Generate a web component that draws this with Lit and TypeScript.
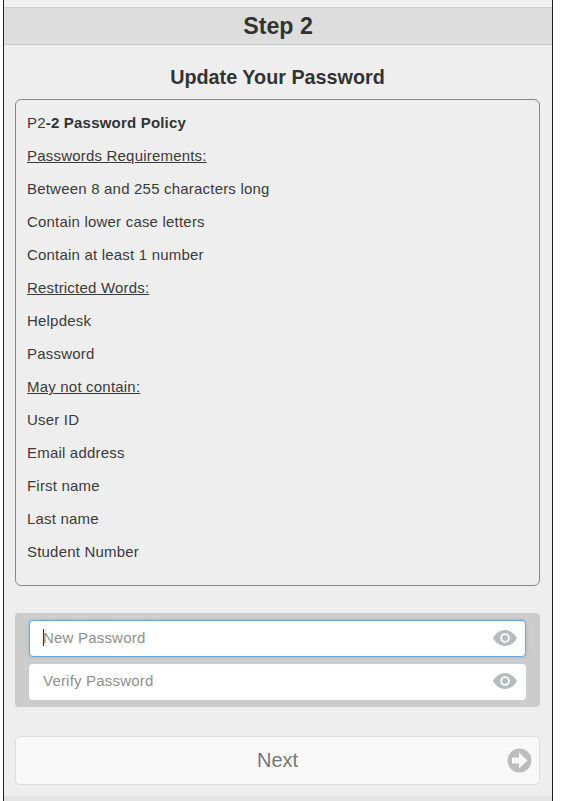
import { LitElement, html, css } from "lit";
import { customElement } from "lit/decorators.js";

const eye = html`<svg class="eye" viewBox="0 0 24 16" aria-hidden="true"><path fill-rule="evenodd" fill="#b4bcbc" d="M12 0C6.4 0 2.2 3.8 0 8c2.2 4.2 6.4 8 12 8s9.8-3.8 12-8C21.8 3.8 17.6 0 12 0ZM12 3.2a4.8 4.8 0 1 1 0 9.6a4.8 4.8 0 0 1 0-9.6Z"/><circle cx="12" cy="8" r="3" fill="#b4bcbc"/></svg>`;

@customElement("app-root")
export class AppRoot extends LitElement {
  static styles = css`
    :host { display: block; background: #fff; height: 801px; overflow: hidden; font-family: "Liberation Sans", Arial, sans-serif; color: #3a3a3a; }
    .page { margin-left: 3px; width: 550px; box-sizing: border-box; height: 801px; border-left: 1px solid #222; border-right: 1px solid #222; background: #eee; display: flex; flex-direction: column; }
    .top { height: 7px; background: #f0f0f0; flex: none; }
    .header { flex: none; height: 38px; box-sizing: border-box; background: #ddd; border-top: 1px solid #ccc; border-bottom: 1px solid #ccc; font-size: 23.2px; font-weight: 700; text-align: center; line-height: 36px; color: #333; }
    .content { flex: 1; padding: 0 12px 0 11px; display: flex; flex-direction: column; }
    h2 { margin: 20px 0 10px; font-size: 19.8px; line-height: 24px; font-weight: 700; text-align: center; color: #333; }
    .policy { height: 487px; box-sizing: border-box; border: 1px solid #888; border-radius: 6px; padding: 6px 11px 0; font-size: 15px; letter-spacing: 0.2px; line-height: 33px; }
    .policy div { height: 33px; white-space: nowrap; }
    .policy b { color: #333; }
    .u { text-decoration: underline; }
    .fields { margin-top: 27px; background: #ccc; border-radius: 4px; padding: 7px 14px; display: flex; flex-direction: column; gap: 7px; }
    .field { height: 36px; box-sizing: border-box; background: #fff; border-radius: 4px; display: flex; align-items: center; padding: 0 9px 0 14px; font-size: 15px; letter-spacing: 0.2px; color: #8f8f8f; }
    .field.focus { height: 37px; border: 1px solid #6fa8d6; box-shadow: 0 0 3px #7fb4dd; padding: 0 8px 0 13px; }
    .field span { flex: 1; margin-top: -4px; }
    .field.focus span { margin-top: -2px; }
    .caret { display: inline-block; width: 1px; height: 17px; margin-right: -1px; background: #333; vertical-align: -3px; }
    .eye { width: 24px; height: 16px; margin-top: -2px; }
    .next { margin-top: 29px; height: 49px; box-sizing: border-box; background: #f8f8f8; border: 1px solid #ddd; border-radius: 5px; display: flex; align-items: center; position: relative; justify-content: center; font-size: 20px; color: #777; }
    .arrow { position: absolute; right: 7px; top: 11px; width: 25px; height: 25px; }
    .bottom { height: 5px; background: #e4e4e4; margin-top: auto; flex: none; }
  `;
  render() {
    return html`<div class="page">
      <div class="top"></div>
      <div class="header">Step 2</div>
      <div class="content">
        <h2>Update Your Password</h2>
        <div class="policy">
          <div>P2<b>-2 Password Policy</b></div>
          <div class="u">Passwords Requirements:</div>
          <div>Between 8 and 255 characters long</div>
          <div>Contain lower case letters</div>
          <div>Contain at least 1 number</div>
          <div class="u">Restricted Words:</div>
          <div>Helpdesk</div>
          <div>Password</div>
          <div class="u">May not contain:</div>
          <div>User ID</div>
          <div>Email address</div>
          <div>First name</div>
          <div>Last name</div>
          <div>Student Number</div>
        </div>
        <div class="fields">
          <div class="field focus"><span><i class="caret"></i>New Password</span>${eye}</div>
          <div class="field"><span>Verify Password</span>${eye}</div>
        </div>
        <div class="next">Next
          <svg class="arrow" viewBox="0 0 25 25" aria-hidden="true"><circle cx="12.5" cy="12.5" r="12" fill="#bdbdbd"/><path fill="#f8f8f8" d="M5 9.5h7V4.5l8.5 8-8.5 8v-5H5Z"/></svg>
        </div>
      </div>
      <div class="bottom"></div>
    </div>`;
  }
}
